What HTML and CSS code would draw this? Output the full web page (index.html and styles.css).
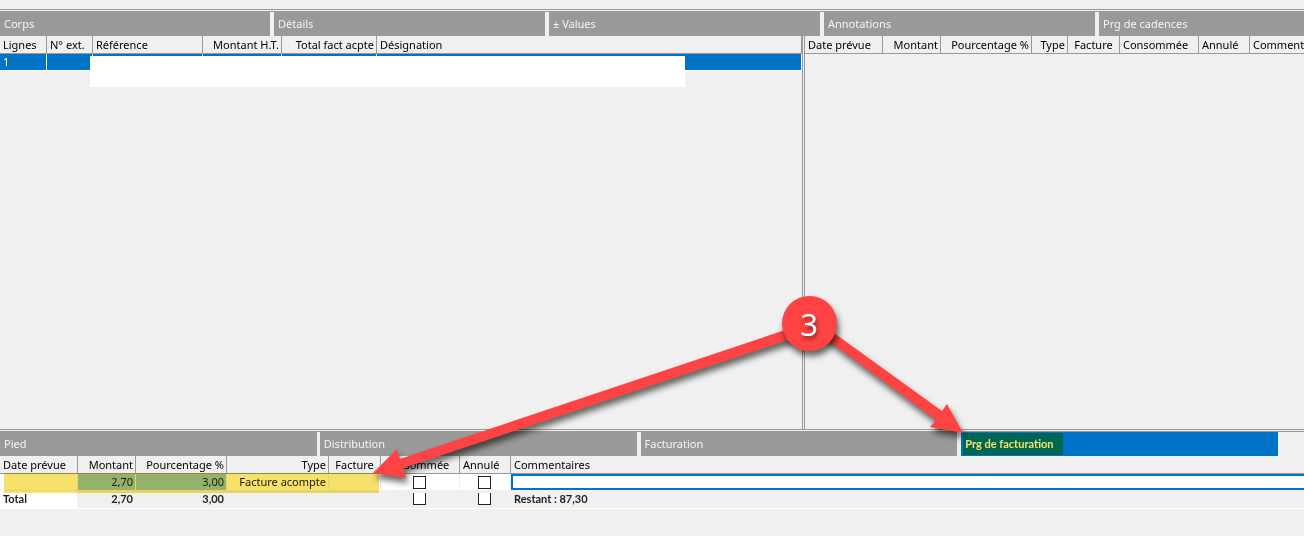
FILE: index.html
```
<!DOCTYPE html>
<html lang="fr">
<head>
  <meta charset="UTF-8">
  <title>Prg de facturation</title>
  <meta name="viewport" content="width=device-width, initial-scale=1">
  <link rel="stylesheet" href="styles.css">
</head>

<body>

  <!-- CORPS -->
  <nav class="tabs tabs-top">
    <button type="button" class="tab">Corps</button>
    <button type="button" class="tab">Détails</button>
    <button type="button" class="tab">± Values</button>
    <button type="button" class="tab">Annotations</button>
    <button type="button" class="tab">Prg de cadences</button>
  </nav>

  <main class="panes">
    <section class="pane pane-left">
      <table class="grid">
        <colgroup>
          <col class="w47"><col class="w46"><col class="w110"><col class="w79"><col class="w95"><col>
        </colgroup>
        <thead>
          <tr>
            <th>Lignes</th>
            <th>N° ext.</th>
            <th>Référence</th>
            <th class="num">Montant H.T.</th>
            <th class="num">Total fact acpte</th>
            <th>Désignation</th>
          </tr>
        </thead>
        <tbody>
          <tr class="selected">
            <td>1</td><td></td><td></td><td></td><td></td><td></td>
          </tr>
        </tbody>
      </table>
      <div class="mask"></div>
    </section>

    <section class="pane pane-right">
      <table class="grid">
        <colgroup>
          <col class="w78"><col class="w58"><col class="w91"><col class="w36"><col class="w52"><col class="w79"><col class="w51"><col>
        </colgroup>
        <thead>
          <tr>
            <th>Date prévue</th>
            <th class="num">Montant</th>
            <th class="num">Pourcentage %</th>
            <th class="num">Type</th>
            <th class="mid">Facture</th>
            <th>Consommée</th>
            <th>Annulé</th>
            <th>Commentaires</th>
          </tr>
        </thead>
      </table>
    </section>
  </main>

  <!-- PIED -->
  <nav class="tabs tabs-bottom">
    <button type="button" class="tab">Pied</button>
    <button type="button" class="tab">Distribution</button>
    <button type="button" class="tab">Facturation</button>
    <button type="button" class="tab active">Prg de facturation<span class="marker marker-tab"></span></button>
  </nav>

  <section class="footer">
    <table class="grid">
      <colgroup>
        <col class="w78"><col class="w58"><col class="w91"><col class="w102"><col class="w52"><col class="w79"><col class="w51"><col>
      </colgroup>
      <thead>
        <tr>
          <th>Date prévue</th>
          <th class="num">Montant</th>
          <th class="num">Pourcentage %</th>
          <th class="num">Type</th>
          <th class="mid">Facture</th>
          <th>Consommée</th>
          <th>Annulé</th>
          <th>Commentaires</th>
        </tr>
      </thead>
      <tbody>
        <tr class="edit">
          <td></td>
          <td class="num picked">2,70</td>
          <td class="num picked">3,00</td>
          <td class="num">Facture acompte</td>
          <td></td>
          <td class="check"><input type="checkbox" aria-label="Consommée"></td>
          <td class="check"><input type="checkbox" aria-label="Annulé"></td>
          <td class="field"><input type="text" class="comment" aria-label="Commentaires"></td>
        </tr>
        <tr class="total">
          <td class="label">Total</td>
          <td class="num">2,70</td>
          <td class="num">3,00</td>
          <td></td>
          <td></td>
          <td class="check"><input type="checkbox" aria-label="Total consommée"></td>
          <td class="check"><input type="checkbox" aria-label="Total annulé"></td>
          <td>Restant : 87,30</td>
        </tr>
      </tbody>
    </table>
    <span class="marker marker-row"></span>
  </section>

  <!-- step number and its two arrows -->
  <svg class="callout" width="1304" height="536" viewBox="0 0 1304 536" aria-hidden="true">
    <g class="arrows">
      <path d="M373 473 L397 449 L400 459 L800 325 L803 335 L403 468 L406 478 Z"/>
      <path d="M963 433 L947 404 L942 411 L820 323 L814 330 L936 420 L930 427 Z"/>
    </g>
    <circle class="bullet" cx="809.5" cy="323.5" r="27.5"/>
    <text class="step" x="809" y="336">3</text>
  </svg>

</body>
</html>
```
FILE: styles.css
```
* {
  box-sizing: border-box;
}

body {
  margin: 0;
  padding: 9px 0 27px;
  min-height: 100vh;
  display: flex;
  flex-direction: column;
  position: relative;
  overflow: hidden;
  background: #f0f0f0;
  color: #000;
  font: 11px/16px "Noto Sans", "Open Sans", sans-serif;
}

button, input {
  font: inherit;
  margin: 0;
}

/* TABS */
.tabs {
  display: flex;
  gap: 4px;
  height: 27px;
  border-top: 1px solid #999;
  padding-top: 2px;
  background: linear-gradient(#999, #999) 0 1px / 100% 1px no-repeat;
  overflow: hidden;
}

.tab {
  border: 0;
  padding: 0 4px;
  background: #999;
  color: #f5f5f5;
  text-align: left;
  white-space: nowrap;
}

.tabs-top .tab {
  flex: 0 0 271px;
}

.tabs-top .tab:first-child {
  flex-basis: 270px;
}

.tabs-bottom {
  padding-right: 26px;
}

.tabs-bottom .tab {
  flex: 1 1 0;
}

.tabs-bottom .tab:first-child {
  margin-right: -1px;
}

.tab.active {
  position: relative;
  background: #0073c7;
  color: #fff;
  font-family: Lato, "Noto Sans", sans-serif;
  font-weight: bold;
}

/* GRIDS */
.panes {
  flex: 1;
  display: flex;
}

.pane {
  position: relative;
  overflow: hidden;
}

.pane-left {
  width: 61.5%;
}

.pane-right {
  flex: 1;
  border-left: 1px solid #999;
  box-shadow: inset 1px 0 #f0f0f0, inset 2px 0 #999;
  padding-left: 2px;
}

.grid {
  width: 100%;
  table-layout: fixed;
  border-collapse: separate;
  border-spacing: 0;
}

.w36 { width: 36px; }
.w46 { width: 46px; }
.w47 { width: 47px; }
.w51 { width: 51px; }
.w52 { width: 52px; }
.w58 { width: 58px; }
.w78 { width: 78px; }
.w79 { width: 79px; }
.w91 { width: 91px; }
.w95 { width: 95px; }
.w102 { width: 102px; }
.w110 { width: 110px; }

th, td {
  padding: 0 3px;
  text-align: left;
  white-space: nowrap;
  overflow: hidden;
}

th {
  height: 18px;
  border-right: 1px solid #999;
  border-bottom: 1px solid #999;
  font-weight: normal;
}

td {
  height: 17px;
  border-right: 1px solid #f0f0f0;
  border-bottom: 1px solid #fff;
}

.footer th:last-child,
.pane-right th:last-child {
  border-right: 0;
}

.num {
  text-align: right;
  padding: 0 2px 0 0;
}

.mid {
  text-align: center;
  padding: 0;
}

.selected td {
  background: #0073c7;
  color: #fff;
}

.mask {
  position: absolute;
  left: 90px;
  top: 20px;
  width: 595px;
  height: 31px;
  background: #fff;
}

/* FOOTER */
.footer {
  position: relative;
}

.edit td {
  background: #fff;
  border-bottom-color: #f0f0f0;
  color: #222;
}

.edit .picked {
  background: #99c9ff;
}

.total td {
  height: 18px;
  padding-bottom: 1px;
  font-family: Lato, "Noto Sans", sans-serif;
  font-weight: bold;
  color: #222;
}

.total .label {
  background: #fff;
}

td.check {
  padding: 0 1px 0 0;
  text-align: center;
  line-height: 0;
}

.check input {
  appearance: none;
  width: 13px;
  height: 13px;
  border: 1px solid #222;
  background: #fff;
  vertical-align: middle;
}

.total .check {
  vertical-align: top;
  padding-top: 2px;
}

.total .check input {
  border-top: 0;
  height: 12px;
  vertical-align: top;
}

td.field {
  padding: 0;
  border-right: 0;
}

.comment {
  display: block;
  width: 100%;
  height: 16px;
  border: 2px solid #0073c7;
  border-right: 0;
  padding: 0 2px;
  background: #fff;
  outline: 0;
}

/* HIGHLIGHTER + CALLOUT */
.marker {
  position: absolute;
  background: #f6e26b;
  mix-blend-mode: multiply;
  pointer-events: none;
}

.marker-tab {
  left: 2px;
  top: 1px;
  width: 100px;
  height: 22px;
}

.marker-row {
  left: 4px;
  top: 17px;
  width: 375px;
  height: 20px;
}

.callout {
  position: absolute;
  left: 0;
  top: 0;
  pointer-events: none;
}

.arrows, .bullet {
  fill: #ff4343;
  filter: drop-shadow(2px 5px 3px rgba(0, 0, 0, .6));
}

.step {
  fill: #fff;
  font-size: 31px;
  text-anchor: middle;
  filter: drop-shadow(1px 3px 2px rgba(0, 0, 0, .5));
}
```
